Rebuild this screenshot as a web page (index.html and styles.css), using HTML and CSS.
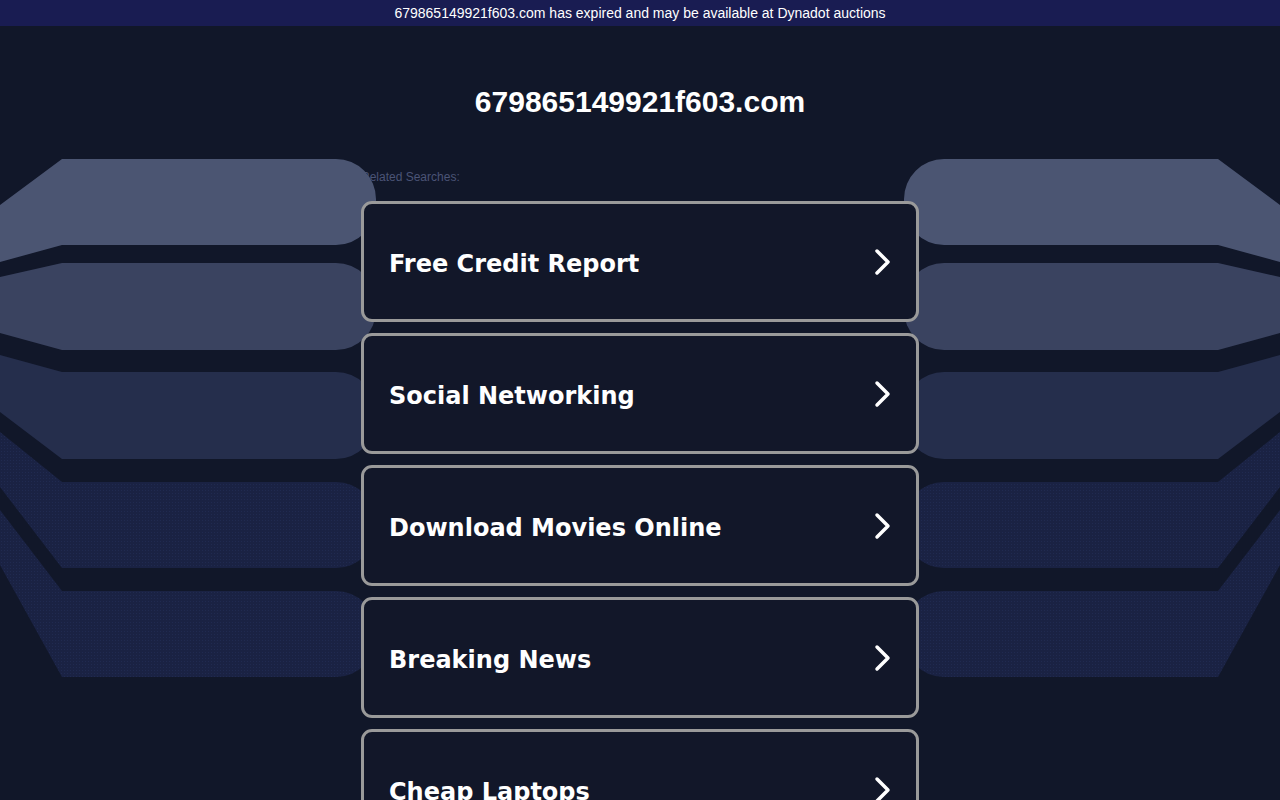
FILE: index.html
```html
<!DOCTYPE html>
<html lang="en">
<head>
<meta charset="utf-8">
<title>679865149921f603.com</title>
<link rel="stylesheet" href="styles.css">
</head>
<body>
<div class="topbar">679865149921f603.com has expired and may be available at Dynadot auctions</div>

<svg class="deco" width="1280" height="800" viewBox="0 0 1280 800" aria-hidden="true">
  <defs>
    <pattern id="dots" width="3" height="3" patternUnits="userSpaceOnUse">
      <rect width="3" height="3" fill="#1a2243"/>
      <rect x="1" y="1" width="1" height="1" fill="#202a50"/>
    </pattern>
    <g id="shapes">
      <path fill="#4b5572" d="M0,205 L62,159 L336,159 A40,40 0 0 1 376,199 L376,205 A40,40 0 0 1 336,245 L62,245 L0,262 Z"/>
      <path fill="#3a4360" d="M0,277 L62,263 L336,263 A40,40 0 0 1 376,303 L376,310 A40,40 0 0 1 336,350 L62,350 L0,333 Z"/>
      <path fill="#252e4c" d="M0,355 L62,372 L336,372 A40,40 0 0 1 376,412 L376,419 A40,40 0 0 1 336,459 L62,459 L0,412 Z"/>
      <path fill="url(#dots)" d="M0,432 L62,482 L336,482 A40,40 0 0 1 376,522 L376,528 A40,40 0 0 1 336,568 L62,568 L0,487 Z"/>
      <path fill="url(#dots)" d="M0,510 L62,591 L336,591 A40,40 0 0 1 376,631 L376,637 A40,40 0 0 1 336,677 L62,677 L0,565 Z"/>
    </g>
  </defs>
  <use href="#shapes"/>
  <use href="#shapes" transform="translate(1280,0) scale(-1,1)"/>
</svg>

<main class="content">
  <h1 class="domain">679865149921f603.com</h1>
  <div class="related">Related Searches:</div>
  <div class="cards">
    <a class="card" href="#"><span>Free Credit Report</span><svg class="chev" width="20" height="30" viewBox="0 0 20 30"><path d="M4,4 L15,15 L4,26"/></svg></a>
    <a class="card" href="#"><span>Social Networking</span><svg class="chev" width="20" height="30" viewBox="0 0 20 30"><path d="M4,4 L15,15 L4,26"/></svg></a>
    <a class="card" href="#"><span>Download Movies Online</span><svg class="chev" width="20" height="30" viewBox="0 0 20 30"><path d="M4,4 L15,15 L4,26"/></svg></a>
    <a class="card" href="#"><span>Breaking News</span><svg class="chev" width="20" height="30" viewBox="0 0 20 30"><path d="M4,4 L15,15 L4,26"/></svg></a>
    <a class="card" href="#"><span>Cheap Laptops</span><svg class="chev" width="20" height="30" viewBox="0 0 20 30"><path d="M4,4 L15,15 L4,26"/></svg></a>
  </div>
</main>
</body>
</html>
```

FILE: styles.css
```css
html, body {
  margin: 0;
  padding: 0;
}
body {
  background: #111729;
  color: #fff;
  font-family: "Liberation Sans", Arial, sans-serif;
  min-height: 800px;
  position: relative;
  overflow: hidden;
}
.topbar {
  height: 26px;
  line-height: 26px;
  background: #191c52;
  color: #fff;
  font-size: 14px;
  text-align: center;
}
.deco {
  position: absolute;
  left: 0;
  top: 0;
  z-index: 1;
  pointer-events: none;
}
.content {
  width: 558px;
  margin: 0 auto;
}
.domain {
  margin: 0;
  padding-top: 59px;
  height: 34px;
  line-height: 34px;
  font-size: 30px;
  font-weight: bold;
  text-align: center;
  color: #fff;
}
.related {
  margin-top: 51px;
  font-size: 12px;
  line-height: 14px;
  color: #4b5476;
}
.cards {
  position: relative;
  z-index: 2;
  margin-top: 17px;
  display: flex;
  flex-direction: column;
  gap: 11px;
}
.card {
  box-sizing: border-box;
  height: 121px;
  display: flex;
  align-items: center;
  justify-content: space-between;
  padding: 0 23px 0 25px;
  border: 3px solid #9a9a9a;
  border-radius: 11px;
  background: #121729;
  color: #fff;
  text-decoration: none;
  font-family: "DejaVu Sans", Verdana, sans-serif;
  font-weight: bold;
  font-size: 24px;
}
.card span {
  padding-top: 5px;
}
.chev path {
  fill: none;
  stroke: #fff;
  stroke-width: 3.5;
  stroke-linecap: round;
  stroke-linejoin: round;
}
```
